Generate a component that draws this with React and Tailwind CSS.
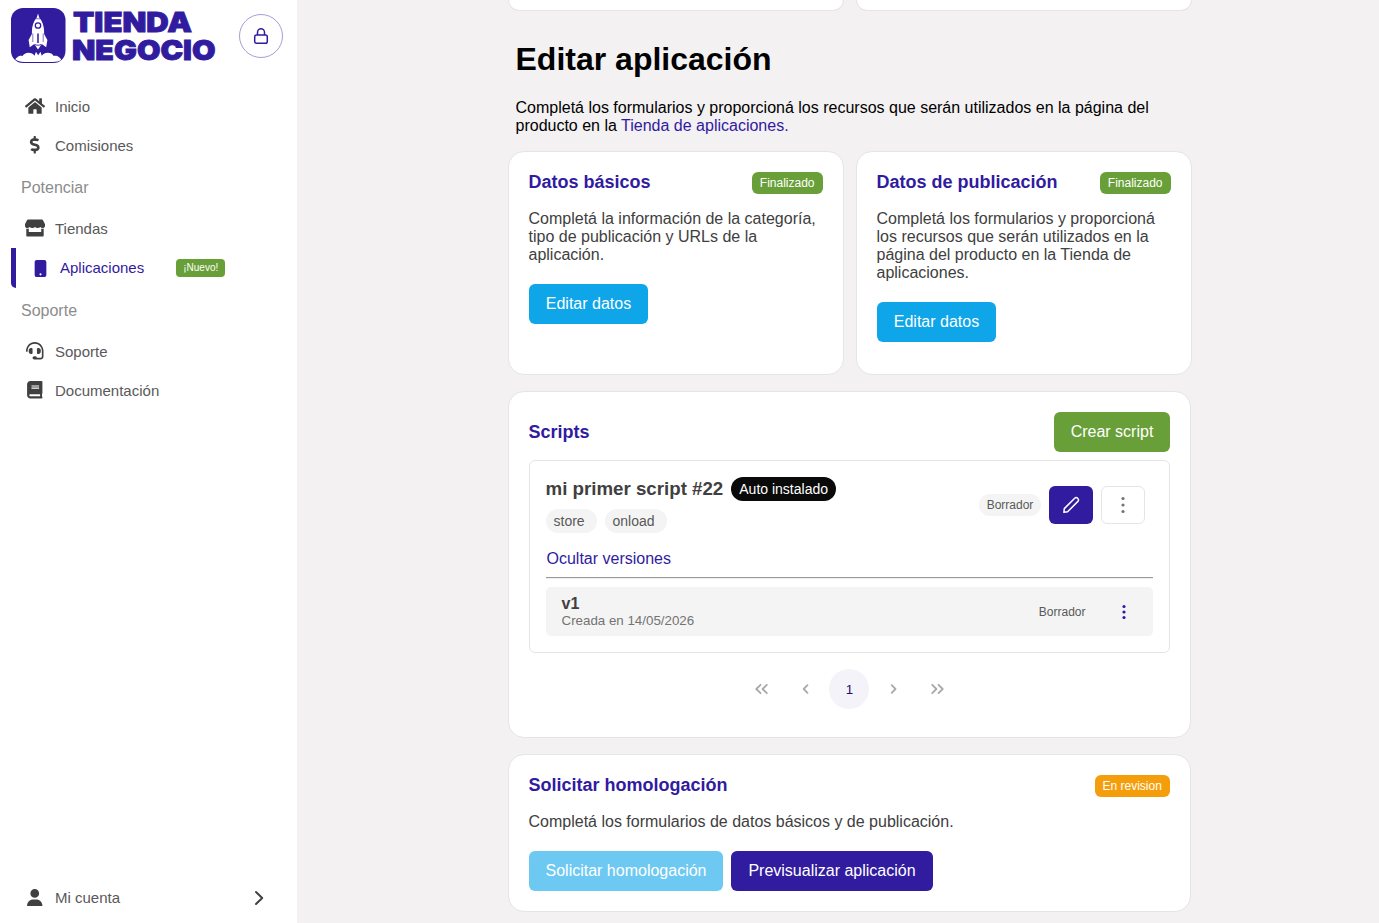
import clsx from 'clsx';
import { FaHome, FaDollarSign, FaHeadset, FaBook } from 'react-icons/fa';
import { FaMobileButton, FaUser } from 'react-icons/fa6';

const menu = [
  {
    items: [
      { label: 'Inicio', icon: FaHome, size: 20 },
      { label: 'Comisiones', icon: FaDollarSign, size: 17.5 },
    ],
  },
  {
    title: 'Potenciar',
    items: [
      { label: 'Tiendas', icon: StoreIcon, size: 20 },
      { label: 'Aplicaciones', icon: FaMobileButton, size: 17, active: true, badge: '¡Nuevo!' },
    ],
  },
  {
    title: 'Soporte',
    items: [
      { label: 'Soporte', icon: FaHeadset, size: 17.5 },
      { label: 'Documentación', icon: FaBook, size: 17.5 },
    ],
  },
];

export default function App() {
  return (
    <div className="flex h-[923px] w-full overflow-hidden bg-[#f3f1f2] font-['Liberation_Sans',Arial,sans-serif] text-base leading-[18px] text-black">
      <Sidebar />
      <main className="ml-[210.5px] w-[684px] shrink-0">
        <div className="grid h-[11px] grid-cols-2 gap-3">
          <div className="rounded-b-2xl border border-t-0 border-[#e5e5e5] bg-white" />
          <div className="rounded-b-2xl border border-t-0 border-[#e5e5e5] bg-white" />
        </div>

        <div className="px-2 pt-[30px]">
          <h1 className="text-[32px] leading-[37px] font-bold">Editar aplicación</h1>
          <p className="mt-[21px] w-[660px]">
            Completá los formularios y proporcioná los recursos que serán utilizados en la página del producto en la{' '}
            <a href="#" className="text-[#311b9f]">Tienda de aplicaciones.</a>
          </p>
        </div>

        <div className="mt-[16px] grid h-[224px] grid-cols-2 gap-3">
          <Card>
            <CardHeader title="Datos básicos" tag="Finalizado" tagClass="bg-[#689f38]" />
            <p className="mt-[16px] text-[#404040]">
              Completá la información de la categoría, tipo de publicación y URLs de la aplicación.
            </p>
            <Button className="mt-[20px] w-[119px] bg-[#0ea5e9]">Editar datos</Button>
          </Card>
          <Card>
            <CardHeader title="Datos de publicación" tag="Finalizado" tagClass="bg-[#689f38]" />
            <p className="mt-[16px] text-[#404040]">
              Completá los formularios y proporcioná los recursos que serán utilizados en la página del producto en la Tienda de aplicaciones.
            </p>
            <Button className="mt-[20px] w-[119px] bg-[#0ea5e9]">Editar datos</Button>
          </Card>
        </div>

        <Card className="mt-4 h-[347px] w-[683px]">
          <div className="flex items-center justify-between">
            <h2 className="text-lg font-bold text-[#311b9f]">Scripts</h2>
            <Button className="w-[116px] bg-[#689f38]">Crear script</Button>
          </div>
          <ScriptItem />
          <Paginator />
        </Card>

        <Card className="mt-4 h-[158px] w-[683px]">
          <CardHeader title="Solicitar homologación" tag="En revision" tagClass="w-[75px] bg-[#f59e0b]" />
          <p className="mt-[16px] text-[#404040]">Completá los formularios de datos básicos y de publicación.</p>
          <div className="mt-[20px] flex gap-2">
            <Button className="w-[194px] bg-[#6ec9f2]">Solicitar homologación</Button>
            <Button className="w-[202px] bg-[#311b9f]">Previsualizar aplicación</Button>
          </div>
        </Card>
      </main>
    </div>
  );
}

function Sidebar() {
  return (
    <aside className="flex h-full w-[297px] shrink-0 flex-col bg-white pl-[11px]">
      <div className="flex items-start justify-between pt-2 pr-[14px]">
        <Logo />
        <button className="mt-[6px] flex size-[44px] items-center justify-center rounded-full border border-[#a79cd6] text-[#311b9f]">
          <LockIcon />
        </button>
      </div>

      <nav className="mt-[24px]">
        {menu.map((group, i) => (
          <div key={i}>
            {group.title && (
              <div className="flex h-[44px] items-center pt-[2px] pl-[10px] text-[#8c8c8c]">{group.title}</div>
            )}
            {group.items.map((item) => (
              <MenuItem key={item.label} {...item} />
            ))}
          </div>
        ))}
      </nav>

      <div className="mt-auto mb-[5px] flex h-[40px] items-center pr-[31px] pl-[14px] text-[15px] text-[#595959]">
        <span className="flex w-5 justify-center pb-px text-[#404040]"><FaUser size={17.5} /></span>
        <span className="ml-[10px]">Mi cuenta</span>
        <svg className="ml-auto" width="14" height="16" viewBox="0 0 14 16" fill="none" stroke="#404040" strokeWidth="2" strokeLinecap="round" strokeLinejoin="round">
          <path d="M4 2l6.200 6L4 14" />
        </svg>
      </div>
    </aside>
  );
}

function MenuItem({ label, icon: Icon, size, active, badge }) {
  return (
    <a
      href="#"
      className={clsx(
        'flex items-center pl-[14px] text-[15px]',
        active ? 'h-[40px] rounded-bl-[5px] border-l-[5px] border-[#311b9f] text-[#311b9f]' : 'h-[39px] text-[#595959]'
      )}
    >
      <span className={clsx('flex w-5 justify-center', !active && 'pb-px text-[#404040]')}>
        <Icon size={size} className="shrink-0" />
      </span>
      <span className="ml-[10px]">{label}</span>
      {badge && (
        <span className="ml-8 flex h-[18px] w-[49px] items-center justify-center rounded bg-[#689f38] text-[10px] leading-none text-white">
          {badge}
        </span>
      )}
    </a>
  );
}

function Card({ className, children }) {
  return <section className={clsx('rounded-2xl border border-[#e5e5e5] bg-white p-5', className)}>{children}</section>;
}

function CardHeader({ title, tag, tagClass }) {
  return (
    <div className="flex h-[22px] items-start justify-between">
      <h2 className="text-lg leading-5 font-bold text-[#311b9f]">{title}</h2>
      <span className={clsx('flex h-[22px] items-center rounded-md px-2 text-xs whitespace-nowrap text-white', tagClass)}>{tag}</span>
    </div>
  );
}

function Button({ className, children }) {
  return (
    <button className={clsx('flex h-10 items-center justify-center rounded-md pl-px text-base whitespace-nowrap text-white', className)}>
      {children}
    </button>
  );
}

function ScriptItem() {
  return (
    <div className="mt-2 h-[193px] rounded-md border border-[#e5e5e5] px-4 pt-4">
      <div className="flex justify-between">
        <div>
          <div className="flex h-6 items-center gap-2">
            <h3 className="text-[18.72px] font-bold text-[#404040]">mi primer script #22</h3>
            <span className="flex h-6 items-center rounded-full bg-[#0a0a0a] px-2 text-sm text-white">Auto instalado</span>
          </div>
          <div className="mt-2 flex gap-2 text-sm text-[#595959]">
            <span className="flex h-6 w-[51px] items-center rounded-full bg-[#f4f4f4] pl-2">store</span>
            <span className="flex h-6 w-[62px] items-center rounded-full bg-[#f4f4f4] pl-2">onload</span>
          </div>
        </div>
        <div className="mt-[9px] mr-2 flex h-[38px] items-center gap-2">
          <span className="flex h-[22px] w-[62px] items-center justify-center rounded-full bg-[#f4f4f4] pl-px text-xs text-[#595959]">Borrador</span>
          <button className="flex h-[38px] w-[44px] items-center justify-center rounded-md bg-[#311b9f] text-white">
            <PencilIcon />
          </button>
          <button className="flex h-[38px] w-[44px] items-center justify-center rounded-md border border-[#e5e5e5] text-[#737373]">
            <DotsIcon gap={6.5} />
          </button>
        </div>
      </div>

      <a href="#" className="mt-[17px] ml-px block w-fit text-[#311b9f]">Ocultar versiones</a>
      <div className="mt-[9px] h-[2px] border-t border-b border-t-[#9a9a9a] border-b-[#eeeeee]" />

      <div className="mt-2 flex h-[49px] items-center rounded-[5px] bg-[#f4f4f4] pr-[19px] pl-4">
        <div>
          <div className="font-bold text-[#404040]">v1</div>
          <div className="text-[13.33px] leading-[15px] text-[#737373]">Creada en 14/05/2026</div>
        </div>
        <span className="ml-auto text-xs text-[#595959]">Borrador</span>
        <span className="ml-[28px] flex w-5 justify-center text-[#311b9f]"><DotsIcon gap={5.5} /></span>
      </div>
    </div>
  );
}

function Paginator() {
  return (
    <div className="mt-4 flex h-10 items-center justify-center gap-1 text-[#a9a9a9]">
      <PageArrow d="M6.500 1.800L2.300 6l4.200 4.200M12.800 1.800L8.600 6l4.200 4.200" />
      <PageArrow d="M9.500 2.200L5.700 6l3.800 3.800" />
      <span className="flex size-10 items-center justify-center rounded-full bg-[#f4f3fa] pt-px pl-px text-[13.33px] text-[#1e1065]">1</span>
      <PageArrow d="M5.700 2.200L9.500 6 5.700 9.800" />
      <PageArrow d="M2.200 1.800L6.400 6l-4.200 4.200M8.500 1.800L12.700 6l-4.200 4.200" />
    </div>
  );
}

function PageArrow({ d }) {
  return (
    <button className="flex size-10 items-center justify-center">
      <svg width="15" height="12" viewBox="0 0 15 12" fill="none" stroke="currentColor" strokeWidth="1.800" strokeLinecap="round" strokeLinejoin="round">
        <path d={d} />
      </svg>
    </button>
  );
}

/* Icons */

function StoreIcon({ className }) {
  return (
    <svg className={className} width="20" height="18" viewBox="0 0 20 18" fill="currentColor">
      <path d="M3.200.5h13.600c.5 0 .9.200 1.100.6l1.900 3.700c.9 1.900-.1 4.100-2 4.300-1 .1-1.900-.3-2.500-1-.6.700-1.500 1-2.600 1s-2-.4-2.700-1c-.7.700-1.600 1-2.700 1s-2-.4-2.600-1c-.6.700-1.500 1.100-2.500 1C.3 8.900-.7 6.700.2 4.800l1.900-3.700c.2-.4.600-.6 1.100-.6z" />
      <path d="M1.300 9.600c1 .3 1.800.2 2.500-.1v3.600h12.400V9.500c.7.300 1.500.4 2.500.1v6.900c0 .6-.4 1-1 1H2.300c-.6 0-1-.4-1-1z" />
    </svg>
  );
}

function DotsIcon({ gap }) {
  return (
    <svg width="6" height="18" viewBox="0 0 6 18" fill="currentColor">
      <circle cx="3" cy={9 - gap} r="1.600" />
      <circle cx="3" cy="9" r="1.600" />
      <circle cx="3" cy={9 + gap} r="1.600" />
    </svg>
  );
}

function PencilIcon() {
  return (
    <svg width="18" height="18" viewBox="0 0 18 18" fill="none" stroke="currentColor" strokeWidth="1.500" strokeLinejoin="round">
      <path d="M1.900 16.300l.4-3.700L12.700 2.200a2 2 0 0 1 2.900 0l.3.300a2 2 0 0 1 0 2.900L5.600 15.800z" />
    </svg>
  );
}

function LockIcon() {
  return (
    <svg width="16" height="18" viewBox="0 0 16 18" fill="none" stroke="currentColor" strokeWidth="1.500">
      <rect x="1.700" y="8" width="12.600" height="8.200" rx="1.800" />
      <path d="M4.500 8V5.200a3.500 3.500 0 0 1 7 0V8" />
    </svg>
  );
}

function Logo() {
  return (
    <svg className="shrink-0 overflow-visible" width="206" height="55" viewBox="0 0 206 55">
      <rect width="54.500" height="55" rx="12" fill="#311b9f" />
      {/* smoke */}
      <path d="M6 49.500c1.500-1.600 3.500-2 5.500-1.500 1.500-3 6-4.300 9.500-2.500 1.300.6 2 1.400 2.500 2.300l1.500-4 2.200 3.500 2.200-3.500 1.400 4c.5-1 1.300-1.800 2.500-2.300 3.500-1.700 8-.5 9.500 2.500 2-.5 4.200 0 5.700 1.500 1 1 1.500 1.600 1.600 2.200C48.500 53 45.500 54 42 54H13c-3.500 0-6.500-1-8.700-2.700.2-.6.700-1.200 1.700-1.800z" fill="#fff" />
      {/* rocket */}
      <path d="M27 5.500l1.200 4c3.300 3.800 4.900 9 4.900 14v2.600l3.300 6-1.200 7.200-4.500-3.400-2 3.100-1.700 2.500-1.700-2.500-2-3.100-4.500 3.400-1.200-7.200 3.300-6v-2.600c0-5 1.600-10.200 4.900-14z" fill="#fff" />
      <circle cx="27" cy="17.500" r="2.700" fill="#fff" stroke="#311b9f" strokeWidth="1.300" />
      <path d="M24.800 10.800h4.400M21.800 25.500v8.500M32.200 25.500v8.500" fill="none" stroke="#311b9f" strokeWidth=".6" />
      <path d="M27 25.500v9.500" stroke="#311b9f" strokeWidth="1.500" />
      <path d="M24 36.500c2 1 4 1 6 0" fill="none" stroke="#311b9f" strokeWidth=".9" />
      <g fill="#311b9f" stroke="#311b9f" strokeWidth=".9" fontFamily="Inter, sans-serif" fontWeight="900" fontSize="27.500">
        <text x="62" y="23.500" textLength="119" lengthAdjust="spacingAndGlyphs">TIENDA</text>
        <text x="61" y="51.500" textLength="143.500" lengthAdjust="spacingAndGlyphs">NEGOCIO</text>
      </g>
    </svg>
  );
}
